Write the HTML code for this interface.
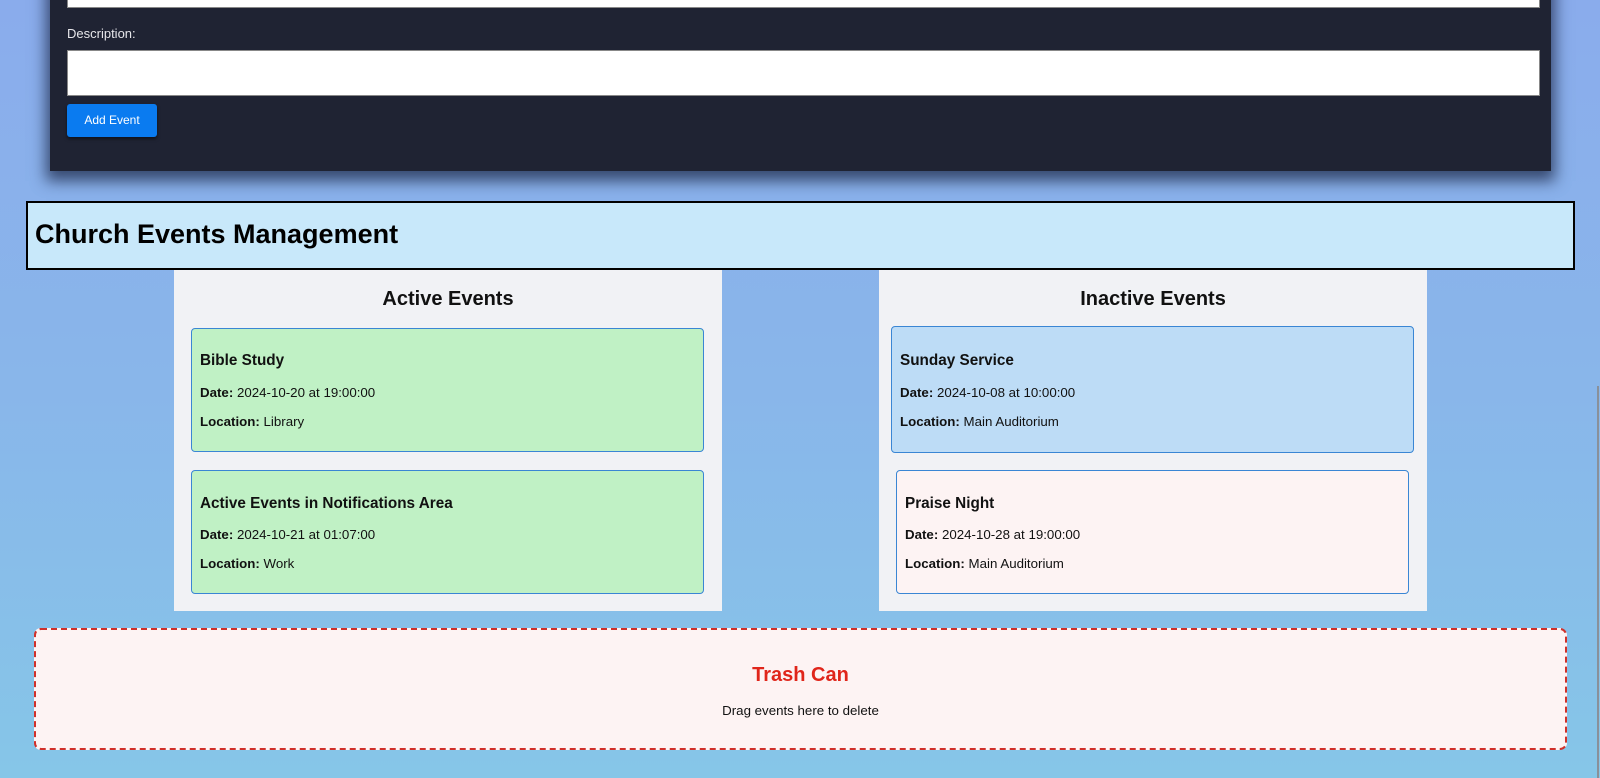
<!DOCTYPE html>
<html><head><meta charset="utf-8"><style>
*{margin:0;padding:0;box-sizing:border-box}
html,body{width:1600px;height:778px;overflow:hidden}
body{font-family:"Liberation Sans",sans-serif;background:linear-gradient(#8aacec 0%,#89b6ea 50%,#86c6e8 100%);position:relative}
.abs{position:absolute}
.panel{left:50px;top:-20px;width:1501px;height:191px;background:#1f2333;box-shadow:0 6px 14px 4px rgba(20,30,60,.7)}
.input{background:#fff;border:1px solid #888}
.card{position:absolute;border:1px solid #3a86d4;border-radius:4px}
.card .t{position:absolute;left:8px;font-size:15.3px;font-weight:bold;color:#111}
.card .d{position:absolute;left:8px;font-size:13.3px;color:#111}
.col{background:#f1f2f5}
.h{position:absolute;font-size:20px;font-weight:bold;color:#111;width:100%;text-align:center}
</style></head><body>
<div class="abs panel"></div>
<div class="abs input" style="left:67px;top:-10px;width:1473px;height:18px"></div>
<div class="abs" style="left:67px;top:26px;font-size:13px;color:#e6e6ea">Description:</div>
<div class="abs input" style="left:67px;top:50px;width:1473px;height:46px"></div>
<div class="abs" style="left:67px;top:104px;width:90px;height:33px;background:#0a7bf0;border-radius:3px;color:#fff;font-size:12px;line-height:33px;text-align:center;box-shadow:0 2px 3px rgba(0,0,0,.5)">Add Event</div>

<div class="abs" style="left:26px;top:201px;width:1549px;height:69px;background:#c8e8fa;border:2px solid #000"></div>
<div class="abs" style="left:35px;top:219px;font-size:27px;font-weight:bold;color:#000">Church Events Management</div>

<div class="abs col" style="left:174px;top:270px;width:548px;height:341px">
 <div class="h" style="top:18px">Active Events</div>
</div>
<div class="abs col" style="left:879px;top:270px;width:548px;height:341px">
 <div class="h" style="top:18px">Inactive Events</div>
</div>

<div class="card" style="left:191px;top:328px;width:513px;height:124px;background:#c0f1c5">
 <div class="t" style="top:23px">Bible Study</div>
 <div class="d" style="top:56px"><b>Date:</b> 2024-10-20 at 19:00:00</div>
 <div class="d" style="top:85px"><b>Location:</b> Library</div>
</div>
<div class="card" style="left:191px;top:470px;width:513px;height:124px;background:#c0f1c5">
 <div class="t" style="top:24px">Active Events in Notifications Area</div>
 <div class="d" style="top:56px"><b>Date:</b> 2024-10-21 at 01:07:00</div>
 <div class="d" style="top:85px"><b>Location:</b> Work</div>
</div>
<div class="card" style="left:891px;top:326px;width:523px;height:127px;background:#bddcf6">
 <div class="t" style="top:25px">Sunday Service</div>
 <div class="d" style="top:58px"><b>Date:</b> 2024-10-08 at 10:00:00</div>
 <div class="d" style="top:87px"><b>Location:</b> Main Auditorium</div>
</div>
<div class="card" style="left:896px;top:470px;width:513px;height:124px;background:#fdf3f3">
 <div class="t" style="top:24px">Praise Night</div>
 <div class="d" style="top:56px"><b>Date:</b> 2024-10-28 at 19:00:00</div>
 <div class="d" style="top:85px"><b>Location:</b> Main Auditorium</div>
</div>

<div class="abs" style="left:34px;top:628px;width:1533px;height:122px;background:#fdf3f3;border:2px dashed #d0302a;border-radius:7px"></div>
<div class="abs" style="left:34px;top:664px;width:1533px;text-align:center;font-size:20px;font-weight:bold;color:#e0251a">Trash Can</div>
<div class="abs" style="left:34px;top:703px;width:1533px;text-align:center;font-size:13.3px;color:#111">Drag events here to delete</div>

<div class="abs" style="left:1597px;top:386px;width:2px;height:392px;background:#8a9099"></div>
</body></html>
